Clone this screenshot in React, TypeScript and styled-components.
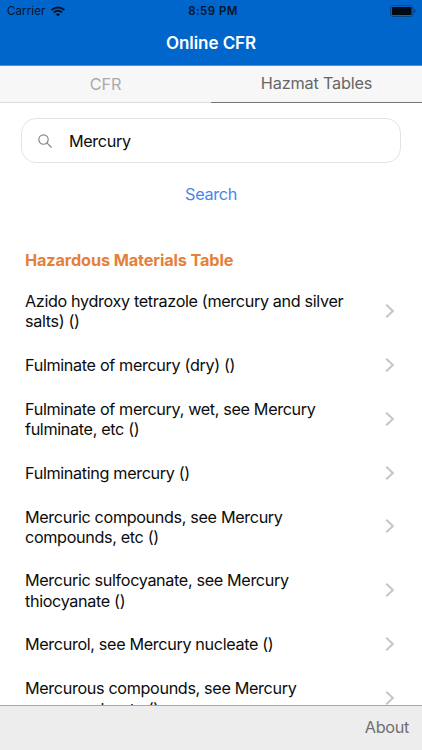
import React from 'react';
import styled, { createGlobalStyle } from 'styled-components';

const GlobalStyle = createGlobalStyle`
  * { box-sizing: border-box; }
  html, body { margin: 0; background: #fff; }
  body { font-family: Inter, "Liberation Sans", sans-serif; overflow: hidden; }
  button, input { font: inherit; letter-spacing: inherit; border: 0; background: none; padding: 0; margin: 0; }
`;

const Screen = styled.div`
  display: flex;
  flex-direction: column;
  width: 100%;
  height: 100vh;
  overflow: hidden;
  background: #fff;
  color: #0c0c0c;
`;

const Header = styled.header`
  flex: none;
  height: 66px;
  background: #0066cc;
  border-bottom: 1px solid #4b91da;
`;

const StatusBar = styled.div`
  display: grid;
  grid-template-columns: 1fr auto 1fr;
  align-items: center;
  height: 22px;
  padding: 0 6px 0 7px;
  color: #061529;
`;

const Carrier = styled.div`
  display: flex;
  align-items: center;
  gap: 6px;
  font-size: 11.5px;
  letter-spacing: 0.1px;
  svg { display: block; }
`;

const Clock = styled.div`
  font-size: 11.5px;
  font-weight: 600;
  letter-spacing: 0.45px;
  margin-left: 3px;
`;

const BatteryIcon = styled.svg`
  display: block;
  justify-self: end;
`;

const Title = styled.h1`
  margin: 0;
  height: 43px;
  line-height: 42px;
  text-align: center;
  color: #fff;
  font-size: 17px;
  font-weight: 600;
  letter-spacing: -0.05px;
`;

const Tabs = styled.nav`
  flex: none;
  display: grid;
  grid-template-columns: 1fr 1fr;
  height: 37px;
  background: #f7f7f7;
`;

const Tab = styled.button<{ $active?: boolean }>`
  display: block;
  padding-bottom: ${p => (p.$active ? '2px' : '0')};
  line-height: ${p => (p.$active ? '33px' : '36px')};
  font-size: 16.3px;
  letter-spacing: -0.2px;
  color: ${p => (p.$active ? '#666' : '#aaa')};
  border-bottom: ${p => (p.$active ? '1.5px solid #777' : '1px solid #dcdcdc')};
`;

const SearchForm = styled.form`
  flex: none;
  display: flex;
  flex-direction: column;
  align-items: center;
  padding: 15px 20px 0;
`;

const SearchField = styled.label`
  display: flex;
  align-items: center;
  gap: 17px;
  width: 380px;
  height: 45px;
  padding: 0 16px;
  border: 1.5px solid #e3e3e3;
  border-radius: 15px;
  svg { flex: none; }
`;

const SearchInput = styled.input`
  flex: 1;
  min-width: 0;
  outline: 0;
  color: #0c0c0c;
  font-size: 16.2px;
  letter-spacing: -0.36px;
`;

const SearchButton = styled.button`
  height: 24px;
  margin-top: 19px;
  color: #4a86e8;
  font-size: 16.3px;
  line-height: 24px;
  letter-spacing: -0.35px;
`;

const Results = styled.main`
  flex: 1;
  min-height: 0;
  overflow: hidden;
  padding: 0 27px 0 25px;
`;

const SectionTitle = styled.h2`
  margin: 42px 0 7px;
  height: 24px;
  line-height: 24px;
  color: #e57f3a;
  font-size: 16.3px;
  font-weight: 700;
  letter-spacing: -0.13px;
`;

const Row = styled.div<{ $tall?: boolean }>`
  display: flex;
  align-items: center;
  justify-content: space-between;
  height: ${p => (p.$tall ? '63.4px' : '44.5px')};
`;

const RowText = styled.span`
  width: 340px;
  padding-top: 1.6px;
  font-size: 16.2px;
  line-height: 20.6px;
  letter-spacing: -0.35px;
  white-space: pre-line;
`;

const Footer = styled.footer`
  flex: none;
  display: flex;
  align-items: center;
  justify-content: flex-end;
  height: 45px;
  padding: 0 13px 2px;
  background: #ededed;
  border-top: 1px solid #a8a8a8;
`;

const AboutButton = styled.button`
  color: #707070;
  font-size: 16.3px;
  letter-spacing: -0.35px;
`;

const rows = [
  'Azido hydroxy tetrazole (mercury and silver\nsalts) ()',
  'Fulminate of mercury (dry) ()',
  'Fulminate of mercury, wet, see Mercury\nfulminate, etc ()',
  'Fulminating mercury ()',
  'Mercuric compounds, see Mercury\ncompounds, etc ()',
  'Mercuric sulfocyanate, see Mercury\nthiocyanate ()',
  'Mercurol, see Mercury nucleate ()',
  'Mercurous compounds, see Mercury\ncompounds, etc ()',
];

const Chevron = () => (
  <svg width="10" height="16" viewBox="0 0 10 16" fill="none" stroke="#c5c5ca" strokeWidth="2">
    <path d="M1.2 1.7 7.9 8l-6.7 6.3" />
  </svg>
);

const Wifi = () => (
  <svg width="14" height="11" viewBox="0 0 14 11" fill="none" stroke="#061529" strokeWidth="2">
    <path d="M.7 4a9 9 0 0 1 12.6 0M3 6.5a5.7 5.7 0 0 1 8 0" />
    <path d="M4.9 8.4a3 3 0 0 1 4.2 0L7 10.6z" fill="#061529" stroke="none" />
  </svg>
);

const SearchIcon = () => (
  <svg width="14" height="14" viewBox="0 0 14 14" fill="none" stroke="#858585" strokeWidth="1.15">
    <circle cx="5.5" cy="5.5" r="4.7" />
    <path d="m8.9 8.9 4.6 4.6" />
  </svg>
);

export default function App() {
  return (
    <Screen>
      <GlobalStyle />
      <Header>
        <StatusBar>
          <Carrier>Carrier <Wifi /></Carrier>
          <Clock>8:59 PM</Clock>
          <BatteryIcon width="26" height="12" viewBox="0 0 26 12">
            <rect x=".5" y=".5" width="22.5" height="11" rx="2.5" fill="none" stroke="#064482" />
            <rect x="2" y="2" width="19.5" height="8" rx="1" fill="#000914" />
            <path d="M24 4q1.6.6 1.6 2T24 8z" fill="#064482" />
          </BatteryIcon>
        </StatusBar>
        <Title>Online CFR</Title>
      </Header>
      <Tabs>
        <Tab>CFR</Tab>
        <Tab $active>Hazmat Tables</Tab>
      </Tabs>
      <SearchForm onSubmit={e => e.preventDefault()}>
        <SearchField>
          <SearchIcon />
          <SearchInput defaultValue="Mercury" aria-label="Search term" />
        </SearchField>
        <SearchButton>Search</SearchButton>
      </SearchForm>
      <Results>
        <SectionTitle>Hazardous Materials Table</SectionTitle>
        {rows.map(text => (
          <Row key={text} $tall={text.includes('\n')}>
            <RowText>{text}</RowText>
            <Chevron />
          </Row>
        ))}
      </Results>
      <Footer>
        <AboutButton>About</AboutButton>
      </Footer>
    </Screen>
  );
}
